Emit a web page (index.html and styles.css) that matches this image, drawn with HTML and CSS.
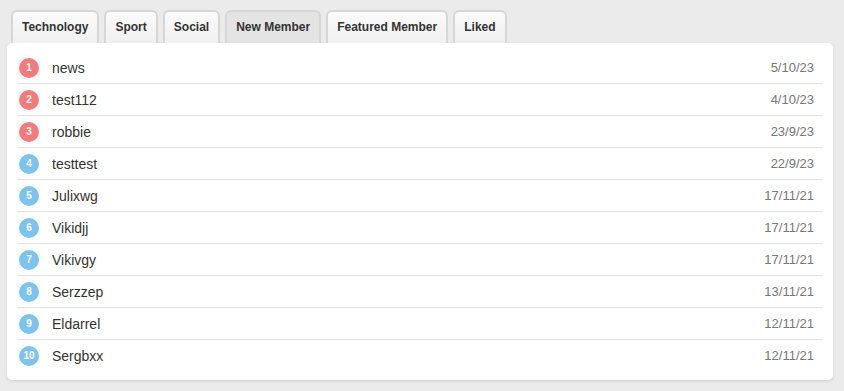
FILE: index.html
```html
<!DOCTYPE html>
<html lang="en">
  <head>
    <meta charset="UTF-8" />
    <title>Members</title>
    <link rel="stylesheet" href="styles.css">
  </head>
  <body>
    <div class="tabs">
      <div class="tab">Technology</div>
      <div class="tab">Sport</div>
      <div class="tab">Social</div>
      <div class="tab active">New Member</div>
      <div class="tab">Featured Member</div>
      <div class="tab">Liked</div>
    </div>
    <div class="panel">
      <ul class="list">
        <li class="row"><span class="num hot">1</span><span class="name">news</span><span class="date">5/10/23</span></li>
        <li class="row"><span class="num hot">2</span><span class="name">test112</span><span class="date">4/10/23</span></li>
        <li class="row"><span class="num hot">3</span><span class="name">robbie</span><span class="date">23/9/23</span></li>
        <li class="row"><span class="num">4</span><span class="name">testtest</span><span class="date">22/9/23</span></li>
        <li class="row"><span class="num">5</span><span class="name">Julixwg</span><span class="date">17/11/21</span></li>
        <li class="row"><span class="num">6</span><span class="name">Vikidjj</span><span class="date">17/11/21</span></li>
        <li class="row"><span class="num">7</span><span class="name">Vikivgy</span><span class="date">17/11/21</span></li>
        <li class="row"><span class="num">8</span><span class="name">Serzzep</span><span class="date">13/11/21</span></li>
        <li class="row"><span class="num">9</span><span class="name">Eldarrel</span><span class="date">12/11/21</span></li>
        <li class="row"><span class="num">10</span><span class="name">Sergbxx</span><span class="date">12/11/21</span></li>
      </ul>
    </div>
  </body>
</html>
```

FILE: styles.css
```css
body {
  margin: 0;
  padding: 10px 11px 10px 7px;
  background-color: #ebebeb;
  font-family: "Liberation Sans", Arial, sans-serif;
  color: #333;
}

.tabs {
  display: flex;
  gap: 5px;
  padding-left: 4px;
}

.tab {
  height: 31px;
  line-height: 31px;
  padding: 0 9px;
  font-size: 12px;
  font-weight: bold;
  color: #333;
  background: linear-gradient(#fafafa, #f0f0f0);
  border: 2px solid #d6d6d6;
  border-bottom: none;
  border-radius: 6px 6px 0 0;
}

.tab.active {
  background: #e4e4e4;
}

.panel {
  background-color: #fff;
  border-radius: 5px;
  box-shadow: 0 1px 3px rgba(0, 0, 0, 0.12);
  padding: 9px 10px 9px 10px;
}

.list {
  list-style: none;
  margin: 0;
  padding: 0;
}

.row {
  display: flex;
  align-items: center;
  height: 31px;
  border-bottom: 1px solid #e3e3e3;
  padding: 0 9px 0 2px;
}

.row:last-child {
  border-bottom: none;
}

.num {
  width: 20px;
  height: 20px;
  border-radius: 50%;
  background-color: #7cc3f0;
  color: #fff;
  font-size: 10px;
  font-weight: bold;
  line-height: 20px;
  text-align: center;
  margin-right: 13px;
}

.num.hot {
  background-color: #f57b7b;
}

.name {
  flex: 1;
  font-size: 14px;
  color: #333;
}

.date {
  font-size: 13px;
  color: #777;
}
```
